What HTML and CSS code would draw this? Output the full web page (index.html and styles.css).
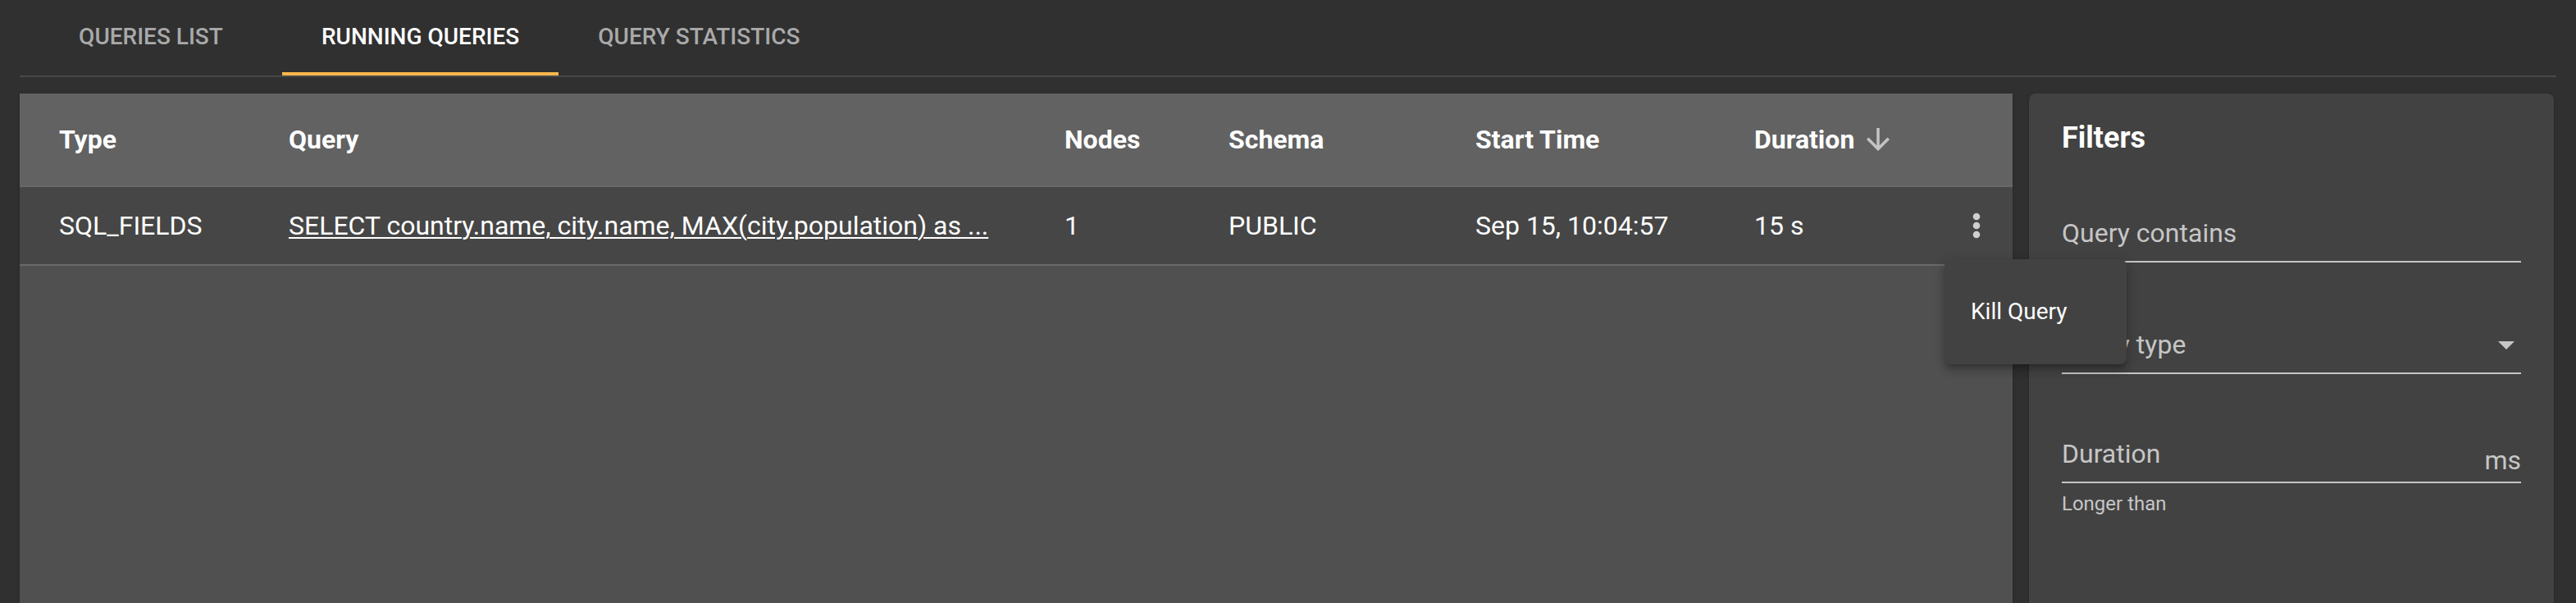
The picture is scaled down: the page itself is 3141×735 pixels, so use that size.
FILE: index.html
```html
<!DOCTYPE html>
<html>
<head>
<meta charset="utf-8">
<title>Running queries</title>
<link rel="stylesheet" href="styles.css">
</head>
<body>
<nav class="tabs">
  <div class="tab">Queries list</div>
  <div class="tab active">Running queries</div>
  <div class="tab">Query statistics</div>
</nav>
<main class="content">
  <section class="table">
    <div class="row head">
      <div class="cell">Type</div>
      <div class="cell">Query</div>
      <div class="cell">Nodes</div>
      <div class="cell">Schema</div>
      <div class="cell">Start Time</div>
      <div class="cell sort">Duration
        <svg class="sort-icon" viewBox="0 0 24 24" width="42" height="42"><path d="M20 12l-1.41-1.41L13 16.17V4h-2v12.17l-5.58-5.59L4 12l8 8 8-8z" fill="#c4c4c4"/></svg>
      </div>
      <div class="cell"></div>
    </div>
    <div class="row body">
      <div class="cell">SQL_FIELDS</div>
      <div class="cell"><span class="query-link">SELECT country.name, city.name, MAX(city.population) as ...</span></div>
      <div class="cell">1</div>
      <div class="cell">PUBLIC</div>
      <div class="cell">Sep 15, 10:04:57</div>
      <div class="cell">15 s</div>
      <div class="cell kebab">
        <svg viewBox="0 0 10 32" width="10" height="32"><circle cx="5" cy="5" r="4.3" fill="#cfcfcf"/><circle cx="5" cy="16" r="4.3" fill="#cfcfcf"/><circle cx="5" cy="27" r="4.3" fill="#cfcfcf"/></svg>
      </div>
    </div>
    <div class="empty"></div>
  </section>
  <aside class="filters">
    <h2 class="filters-title">Filters</h2>
    <div class="field f1">
      <div class="input"><span class="label">Query contains</span></div>
    </div>
    <div class="field f2">
      <div class="input"><span class="label">Query type</span>
        <svg class="caret" viewBox="0 0 20 10" width="20" height="10"><path d="M0 0h20L10 10z" fill="#c6c6c6"/></svg>
      </div>
    </div>
    <div class="field f3">
      <div class="input"><span class="label">Duration</span><span class="suffix">ms</span></div>
      <div class="hint">Longer than</div>
    </div>
  </aside>
</main>
<div class="menu">
  <div class="menu-item">Kill Query</div>
</div>
</body>
</html>
```
FILE: styles.css
```css
html, body {
  margin: 0;
  height: 100%;
  overflow: hidden;
}
body {
  background: #303030;
  font-family: Roboto, "Noto Sans", "Liberation Sans", sans-serif;
  color: #fff;
  display: flex;
  flex-direction: column;
}
.tabs {
  display: flex;
  margin: 0 24px;
  height: 92px;
  border-bottom: 2px solid #484848;
  flex: none;
}
.tab {
  min-width: 320px;
  padding: 0 48px 3px;
  box-sizing: border-box;
  display: flex;
  align-items: center;
  justify-content: center;
  font-size: 28px;
  font-weight: 500;
  text-transform: uppercase;
  color: #a9a9a9;
}
.tab.active {
  color: #fff;
  box-shadow: inset 0 -4px 0 #ffb74d;
}
.content {
  flex: 1;
  min-height: 0;
  display: flex;
  gap: 20px;
  padding: 20px 27px 0 24px;
}
.table {
  width: 2430px;
  flex: none;
  display: flex;
  flex-direction: column;
  background: #505050;
  box-shadow: 0 3px 1px -2px rgba(0,0,0,.2), 0 2px 2px 0 rgba(0,0,0,.14), 0 1px 5px 0 rgba(0,0,0,.12);
}
.row {
  display: grid;
  grid-template-columns: 280px 946px 200px 301px 340px 1fr auto;
  align-items: center;
  padding: 0 39px 0 48px;
  border-bottom: 2px solid #696969;
  font-size: 32px;
}
.head {
  height: 112px;
  background: #626262;
  font-weight: 700;
}
.body {
  height: 94px;
  background: #464646;
}
.cell {
  white-space: nowrap;
}
.sort {
  display: flex;
  align-items: center;
  gap: 8px;
}
.sort-icon {
  display: block;
}
.query-link {
  text-decoration: underline;
  text-decoration-thickness: 2px;
  text-underline-offset: 3px;
}
.kebab svg {
  display: block;
}
.empty {
  flex: 1;
}
.filters {
  width: 640px;
  flex: none;
  box-sizing: border-box;
  background: #424242;
  border-radius: 8px 8px 0 0;
  padding: 30px 40px 0;
  box-shadow: 0 3px 1px -2px rgba(0,0,0,.2), 0 2px 2px 0 rgba(0,0,0,.14), 0 1px 5px 0 rgba(0,0,0,.12);
}
.filters-title {
  margin: 0;
  font-size: 36px;
  line-height: 48px;
  font-weight: 700;
}
.input {
  display: flex;
  align-items: flex-start;
  height: 40px;
  line-height: 40px;
  padding-bottom: 14px;
  border-bottom: 2px solid #c6c6c6;
  font-size: 32px;
  color: #c6c6c6;
}
.label {
  flex: 1;
}
.f1 { margin-top: 72px; }
.f2 { margin-top: 80px; }
.f3 { margin-top: 77px; }
.caret {
  margin: 16px 8px 0 0;
  display: block;
}
.suffix {
  padding-top: 8px;
}
.hint {
  margin-top: 9px;
  font-size: 24px;
  line-height: 32px;
  color: #c6c6c6;
}
.menu {
  position: absolute;
  left: 2371px;
  top: 316px;
  width: 222px;
  padding: 16px 0;
  background: #424242;
  border-radius: 8px;
  box-shadow: 0 5px 5px -3px rgba(0,0,0,.2), 0 8px 10px 1px rgba(0,0,0,.14), 0 3px 14px 2px rgba(0,0,0,.12);
}
.menu-item {
  height: 96px;
  line-height: 96px;
  padding: 0 32px;
  font-size: 28px;
  color: #fff;
}
```
